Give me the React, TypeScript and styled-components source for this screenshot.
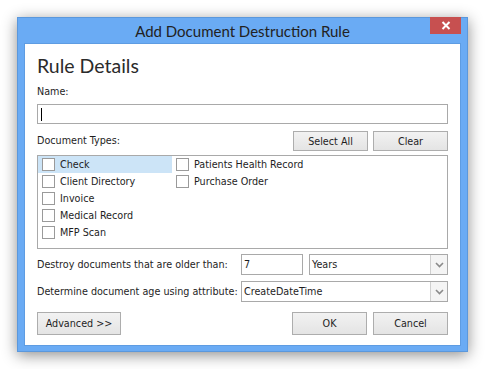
import React, { FC } from "react";
import styled, { createGlobalStyle } from "styled-components";

const GlobalStyle = createGlobalStyle`
  html, body {
    margin: 0;
    padding: 0;
    background: #ffffff;
  }
  body {
    font-family: "DejaVu Sans Condensed", "Liberation Sans", sans-serif;
    font-size: 10.7px;
    color: #1e1e1e;
  }
`;

const docTypes = [
  "Check",
  "Client Directory",
  "Invoice",
  "Medical Record",
  "MFP Scan",
  "Patients Health Record",
  "Purchase Order",
];

const Chevron: FC = () => (
  <svg width="9" height="6" viewBox="0 0 9 6">
    <path d="M1 1 L4.5 4.5 L8 1" fill="none" stroke="#8a8a8a" strokeWidth="1.6" />
  </svg>
);

const App: FC = () => {
  return (
    <Page>
      <GlobalStyle />
      <Frame>
        <TitleBar>
          <span />
          <Title>Add Document Destruction Rule</Title>
          <CloseButton>
            <svg width="10" height="9" viewBox="0 0 10 9">
              <path d="M1.5 1 L8.5 8 M8.5 1 L1.5 8" stroke="#ffffff" strokeWidth="2" />
            </svg>
          </CloseButton>
        </TitleBar>
        <Content>
          <Heading>Rule Details</Heading>
          <Label>Name:</Label>
          <TextBox>
            <Caret />
          </TextBox>
          <TypesRow>
            <Label>Document Types:</Label>
            <Spacer />
            <Button>Select All</Button>
            <Button>Clear</Button>
          </TypesRow>
          <ListBox>
            {docTypes.map((name, i) => (
              <ListItem key={name} $selected={i === 0}>
                <CheckBox />
                <span>{name}</span>
              </ListItem>
            ))}
          </ListBox>
          <FieldGrid>
            <FieldLabel>Destroy documents that are older than:</FieldLabel>
            <AgeRow>
              <SmallBox>7</SmallBox>
              <Combo>
                <ComboText>Years</ComboText>
                <ComboArrow>
                  <Chevron />
                </ComboArrow>
              </Combo>
            </AgeRow>
            <FieldLabel>Determine document age using attribute:</FieldLabel>
            <Combo>
              <ComboText>CreateDateTime</ComboText>
              <ComboArrow>
                <Chevron />
              </ComboArrow>
            </Combo>
          </FieldGrid>
          <Footer>
            <Button $wide>Advanced &gt;&gt;</Button>
            <Spacer />
            <Button $tall>OK</Button>
            <Button $tall>Cancel</Button>
          </Footer>
        </Content>
      </Frame>
    </Page>
  );
};

const Page = styled.div`
  padding: 17px 0 0 17px;
  height: 369px;
  box-sizing: border-box;
`;

const Frame = styled.div`
  width: 451px;
  box-sizing: border-box;
  background: #6aabf4;
  border: 1px solid #5b98dc;
  padding: 0 6px 5px;
  box-shadow: 0 3px 14px rgba(0, 0, 0, 0.45);
`;

const TitleBar = styled.div`
  display: grid;
  grid-template-columns: 31px 1fr 31px;
  align-items: start;
  height: 25px;
`;

const Title = styled.div`
  font-family: Lato, "Open Sans", sans-serif;
  font-size: 15px;
  line-height: 24px;
  color: #222222;
  text-align: center;
  padding-top: 1px;
`;

const CloseButton = styled.div`
  display: flex;
  align-items: center;
  justify-content: center;
  height: 17px;
  margin-top: -1px;
  background: #c75050;
`;

const Content = styled.div`
  display: flex;
  flex-direction: column;
  background: #ffffff;
  border: 1px solid #5e9ce2;
  padding: 8px 12px 10px;
`;

const Heading = styled.h1`
  margin: 0;
  font-family: Lato, "Open Sans", sans-serif;
  font-weight: 400;
  font-size: 19.5px;
  line-height: 28px;
  color: #2b2b2b;
`;

const Label = styled.div`
  line-height: 14px;
  margin-top: 5px;
`;

const TextBox = styled.div`
  display: flex;
  align-items: center;
  height: 20px;
  box-sizing: border-box;
  margin-top: 5px;
  border: 1px solid #a9a9a9;
  padding-left: 3px;
`;

const Caret = styled.span`
  width: 1px;
  height: 13px;
  background: #000000;
`;

const TypesRow = styled.div`
  display: flex;
  align-items: center;
  gap: 5px;
  margin-top: 7px;
  ${Label} {
    margin-top: 0;
  }
`;

const Spacer = styled.div`
  flex: 1;
`;

const Button = styled.div<{ $wide?: boolean; $tall?: boolean }>`
  display: flex;
  align-items: center;
  justify-content: center;
  box-sizing: border-box;
  width: ${(p) => (p.$wide ? "84px" : "75px")};
  height: ${(p) => (p.$wide || p.$tall ? "23px" : "20px")};
  border: 1px solid #adadad;
  background: linear-gradient(#f2f2f2, #e4e4e4);
  color: #1e1e1e;
`;

const ListBox = styled.div`
  display: grid;
  grid-auto-flow: column;
  grid-template-rows: repeat(5, 17px);
  grid-template-columns: 134px 134px;
  align-content: start;
  height: 94px;
  box-sizing: border-box;
  margin-top: 4px;
  border: 1px solid #a9a9a9;
`;

const ListItem = styled.div<{ $selected?: boolean }>`
  display: flex;
  align-items: center;
  gap: 5px;
  padding-left: 4px;
  background: ${(p) => (p.$selected ? "#cce4f7" : "transparent")};
  white-space: nowrap;
`;

const CheckBox = styled.span`
  width: 13px;
  height: 13px;
  box-sizing: border-box;
  border: 1px solid #9a9a9a;
  background: #ffffff;
  margin-top: -1px;
`;

const FieldGrid = styled.div`
  display: grid;
  grid-template-columns: 204px 1fr;
  grid-auto-rows: 21px;
  row-gap: 6px;
  align-items: center;
  margin-top: 5px;
`;

const FieldLabel = styled.div`
  white-space: nowrap;
`;

const AgeRow = styled.div`
  display: flex;
  gap: 6px;
  height: 21px;
`;

const SmallBox = styled.div`
  width: 62px;
  box-sizing: border-box;
  border: 1px solid #a9a9a9;
  padding-left: 2px;
  line-height: 19px;
`;

const Combo = styled.div`
  display: flex;
  flex: 1;
  height: 21px;
  box-sizing: border-box;
  border: 1px solid #a9a9a9;
`;

const ComboText = styled.div`
  flex: 1;
  padding-left: 2px;
  line-height: 19px;
`;

const ComboArrow = styled.div`
  display: flex;
  align-items: center;
  justify-content: center;
  width: 16px;
  border-left: 1px solid #cfcfcf;
  background: #f4f4f4;
`;

const Footer = styled.div`
  display: flex;
  gap: 6px;
  margin-top: 10px;
`;

export default App;
